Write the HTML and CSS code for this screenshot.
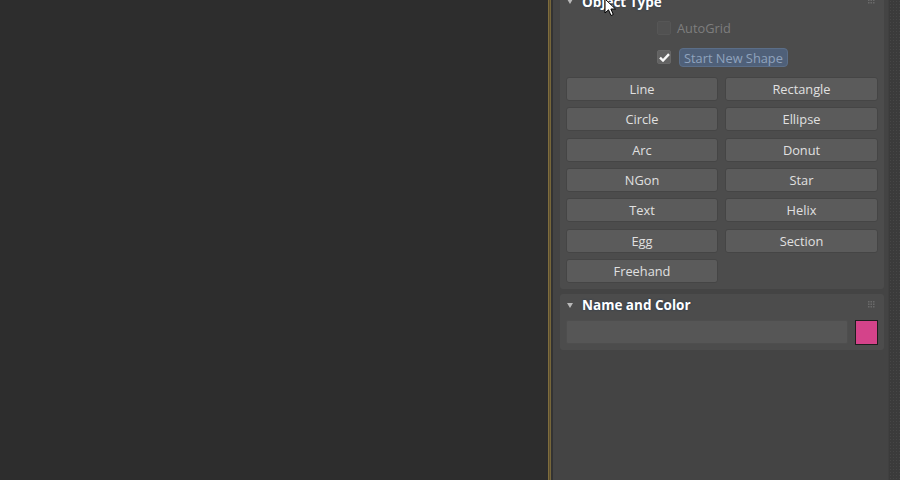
FILE: index.html
```html
<!DOCTYPE html>
<html>
<head>
<meta charset="utf-8">
<link rel="stylesheet" href="styles.css">
</head>
<body>
<div class="app">
  <div class="viewport"></div>
  <div class="divider"></div>
  <div class="cmdpanel">
    <section class="rollout rollout-first">
      <div class="rhead">
        <span class="tri"></span>
        <span class="rtitle">Object Type</span>
        <svg class="grip" width="7" height="7" viewBox="0 0 7 7"><g fill="#6a6a6a"><rect x="0" y="0" width="1.5" height="1.5"/><rect x="2.5" y="0" width="1.5" height="1.5"/><rect x="5" y="0" width="1.5" height="1.5"/><rect x="0" y="2.5" width="1.5" height="1.5"/><rect x="2.5" y="2.5" width="1.5" height="1.5"/><rect x="5" y="2.5" width="1.5" height="1.5"/><rect x="0" y="5" width="1.5" height="1.5"/><rect x="2.5" y="5" width="1.5" height="1.5"/><rect x="5" y="5" width="1.5" height="1.5"/></g></svg>
      </div>
      <div class="checks">
        <div class="checkrow disabled">
          <span class="cbox"></span>
          <span class="clabel">AutoGrid</span>
        </div>
        <div class="checkrow">
          <span class="cbox on"><svg width="11" height="9" viewBox="0 0 11 9"><path d="M1 4.6 L4 7.5 L10 1.2" fill="none" stroke="#f8f8f8" stroke-width="2.4"/></svg></span>
          <span class="clabel hl">Start New Shape</span>
        </div>
      </div>
      <div class="btngrid">
        <button class="btn">Line</button>
        <button class="btn">Rectangle</button>
        <button class="btn">Circle</button>
        <button class="btn">Ellipse</button>
        <button class="btn">Arc</button>
        <button class="btn">Donut</button>
        <button class="btn">NGon</button>
        <button class="btn">Star</button>
        <button class="btn">Text</button>
        <button class="btn">Helix</button>
        <button class="btn">Egg</button>
        <button class="btn">Section</button>
        <button class="btn">Freehand</button>
      </div>
    </section>
    <section class="rollout">
      <div class="rhead">
        <span class="tri"></span>
        <span class="rtitle">Name and Color</span>
        <svg class="grip" width="7" height="7" viewBox="0 0 7 7"><g fill="#6a6a6a"><rect x="0" y="0" width="1.5" height="1.5"/><rect x="2.5" y="0" width="1.5" height="1.5"/><rect x="5" y="0" width="1.5" height="1.5"/><rect x="0" y="2.5" width="1.5" height="1.5"/><rect x="2.5" y="2.5" width="1.5" height="1.5"/><rect x="5" y="2.5" width="1.5" height="1.5"/><rect x="0" y="5" width="1.5" height="1.5"/><rect x="2.5" y="5" width="1.5" height="1.5"/><rect x="5" y="5" width="1.5" height="1.5"/></g></svg>
      </div>
      <div class="namerow">
        <div class="namefield"></div>
        <div class="swatch"></div>
      </div>
    </section>
  </div>
  <div class="scrollstrip"></div>
  <svg class="cursor" width="14" height="20" viewBox="0 0 14 20"><path d="M1 1 L1 15 L4.5 11.8 L7 17.5 L9.3 16.5 L6.9 11 L11.5 11 Z" fill="#ffffff" stroke="#000000" stroke-width="1"/></svg>
</div>
</body>
</html>
```

FILE: styles.css
```css
html, body {
  margin: 0;
  padding: 0;
  background: #2d2d2d;
}
.app {
  position: relative;
  display: flex;
  width: 900px;
  height: 480px;
  overflow: hidden;
  font-family: "Open Sans", "DejaVu Sans", sans-serif;
  font-size: 12.8px;
}
.viewport {
  flex: 0 0 548px;
  background: #2d2d2d;
}
.divider {
  flex: 0 0 5px;
  background: linear-gradient(to right, #7f6d3d 0, #7f6d3d 1px, #5d5030 1px, #5d5030 2px, #76663a 2px, #76663a 3px, #333 3px, #333 5px);
}
.cmdpanel {
  flex: 0 0 335px;
  box-sizing: border-box;
  padding: 0 4px 0 7px;
  background: #444444;
  display: flex;
  flex-direction: column;
  gap: 5px;
}
.scrollstrip {
  flex: 0 0 12px;
  background-color: #3b3b3b;
  background-image: radial-gradient(circle, #464646 0.8px, transparent 1px);
  background-size: 3px 3px;
  border-left: 1px solid #404040;
}
.rollout {
  background: #4c4c4c;
  border-radius: 3px;
  padding: 0 6px 5px 6px;
}
.rollout-first {
  margin-top: -10px;
  padding-bottom: 6px;
}
.rhead {
  height: 22px;
  display: flex;
  align-items: center;
  position: relative;
  padding-top: 1px;
  box-sizing: border-box;
}
.tri {
  width: 0;
  height: 0;
  border-left: 3.5px solid transparent;
  border-right: 3.5px solid transparent;
  border-top: 5px solid #b8b8b8;
  margin-left: 1px;
  margin-right: 9px;
}
.rtitle {
  font-weight: bold;
  font-size: 13.5px;
  color: #ffffff;
  text-shadow: 0 0 2px #1f3550;
}
.grip {
  position: absolute;
  right: 3px;
  top: 7px;
}
.checks {
  display: flex;
  flex-direction: column;
  gap: 9px;
  padding: 6px 0 0 91px;
}
.checkrow {
  height: 20px;
  display: flex;
  align-items: center;
}
.cbox {
  width: 14px;
  height: 14px;
  box-sizing: border-box;
  background: #515151;
  border: 1px solid #565656;
  border-radius: 2px;
  margin-right: 6px;
  display: flex;
  align-items: center;
  justify-content: center;
}
.cbox.on {
  background: #626262;
  border-color: #676767;
}
.clabel {
  color: #dcdcdc;
}
.disabled .clabel {
  color: #7e7e7e;
}
.clabel.hl {
  margin-left: 2px;
  background: #4f6079;
  border: 1px solid #5b6e88;
  border-radius: 4px;
  color: #8fa3bd;
  padding: 0 4px;
  height: 19px;
  line-height: 18px;
  box-sizing: border-box;
}
.btngrid {
  margin-top: 10px;
  display: grid;
  grid-template-columns: 152px 153px;
  column-gap: 7px;
  row-gap: 6.33px;
}
.btn {
  appearance: none;
  -webkit-appearance: none;
  height: 24px;
  margin: 0;
  padding: 0;
  background: #5b5b5b;
  border: 1px solid #454545;
  border-radius: 3px;
  color: #e0e0e0;
  font-family: "Open Sans", "DejaVu Sans", sans-serif;
  font-size: 12.8px;
  text-align: center;
}
.namerow {
  margin-top: 4px;
  display: flex;
  gap: 7px;
  align-items: center;
}
.namefield {
  flex: 0 0 282px;
  height: 24px;
  box-sizing: border-box;
  background: #565656;
  border: 1px solid #4e4e4e;
  border-radius: 2px;
}
.swatch {
  width: 23px;
  height: 25px;
  box-sizing: border-box;
  background: #d4438a;
  border: 1px solid #1e1e1e;
}
.cursor {
  position: absolute;
  left: 604px;
  top: -2px;
}
```
